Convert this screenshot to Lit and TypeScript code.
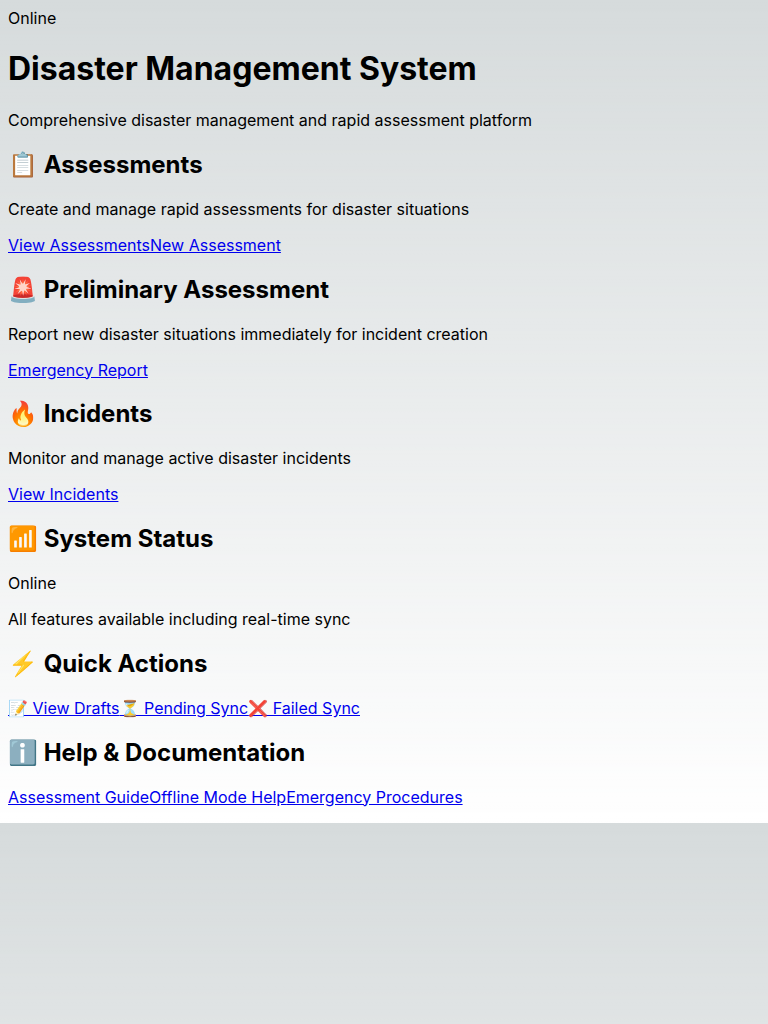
import { LitElement, html, css } from "lit";
import { customElement } from "lit/decorators.js";

interface Section {
  icon: string;
  title: string;
  lines: string[];
  links: string[];
}

const sections: Section[] = [
  { icon: "📋", title: "Assessments", lines: ["Create and manage rapid assessments for disaster situations"], links: ["View Assessments", "New Assessment"] },
  { icon: "🚨", title: "Preliminary Assessment", lines: ["Report new disaster situations immediately for incident creation"], links: ["Emergency Report"] },
  { icon: "🔥", title: "Incidents", lines: ["Monitor and manage active disaster incidents"], links: ["View Incidents"] },
  { icon: "📶", title: "System Status", lines: ["Online", "All features available including real-time sync"], links: [] },
  { icon: "⚡", title: "Quick Actions", lines: [], links: ["📝 View Drafts", "⏳ Pending Sync", "❌ Failed Sync"] },
  { icon: "ℹ️", title: "Help & Documentation", lines: [], links: ["Assessment Guide", "Offline Mode Help", "Emergency Procedures"] },
];

@customElement("app-root")
export class AppRoot extends LitElement {
  static styles = css`
    :host {
      display: block;
      min-height: 1024px;
      font-family: Inter, sans-serif;
      font-size: 16px;
      color: #000;
      background: linear-gradient(to bottom, transparent, rgb(255, 255, 255)) 0 0 / 100% 823px repeat-y rgb(214, 219, 220);
    }
    .page {
      padding: 8px;
    }
    .title {
      font-size: 32px;
      font-weight: 700;
      margin: 21.44px 0;
    }
    .heading {
      font-size: 24px;
      font-weight: 700;
      margin: 19.92px 0;
    }
    .text {
      margin: 16px 0;
    }
    .link {
      color: #0000ee;
      text-decoration: underline;
    }
  `;

  render() {
    return html`<main class="page">
      <div>Online</div>
      <h1 class="title">Disaster Management System</h1>
      <p class="text">Comprehensive disaster management and rapid assessment platform</p>
      ${sections.map(
        (s) => html`<section>
          <h2 class="heading">${s.icon} ${s.title}</h2>
          ${s.lines.map((line) => html`<p class="text">${line}</p>`)}
          <div>${s.links.map((link) => html`<a class="link" href="#">${link}</a>`)}</div>
        </section>`
      )}
    </main>`;
  }
}
